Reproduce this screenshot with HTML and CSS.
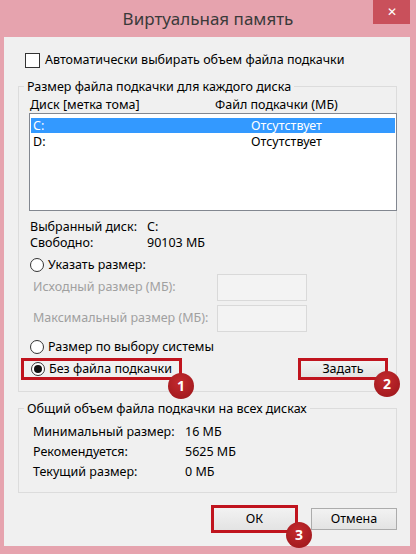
FILE: index.html
```html
<!DOCTYPE html>
<html lang="ru">
<head>
    <meta charset="UTF-8">
    <title>Виртуальная память</title>
    <link rel="stylesheet" href="styles.css">
</head>
<body>
    <div class="window">
        <div class="titlebar">
            <span></span>
            <div class="title">Виртуальная память</div>
            <div class="close-col"><div class="close-btn">✕</div></div>
        </div>

        <div class="client">
            <div class="check-row">
                <span class="checkbox"></span>
                <span>Автоматически выбирать объем файла подкачки</span>
            </div>

            <fieldset class="group group-disks">
                <legend>Размер файла подкачки для каждого диска</legend>
                <div class="list-head">
                    <span>Диск [метка тома]</span>
                    <span>Файл подкачки (МБ)</span>
                </div>
                <div class="listbox">
                    <div class="list-row selected"><span>C:</span><span>Отсутствует</span></div>
                    <div class="list-row"><span>D:</span><span>Отсутствует</span></div>
                </div>

                <div class="info-grid">
                    <span>Выбранный диск:</span><span>C:</span>
                    <span>Свободно:</span><span>90103 МБ</span>
                </div>

                <div class="radio-row first">
                    <span class="radio"></span>
                    <span>Указать размер:</span>
                </div>
                <div class="size-row">
                    <span>Исходный размер (МБ):</span>
                    <span class="input-box"></span>
                </div>
                <div class="size-row">
                    <span>Максимальный размер (МБ):</span>
                    <span class="input-box"></span>
                </div>
                <div class="radio-row system">
                    <span class="radio"></span>
                    <span>Размер по выбору системы</span>
                </div>
                <div class="action-row">
                    <div class="highlight mark-1">
                        <span class="radio checked"></span>
                        <span>Без файла подкачки</span>
                        <span class="badge">1</span>
                    </div>
                    <div class="btn btn-set">
                        Задать
                        <span class="badge">2</span>
                    </div>
                </div>
            </fieldset>

            <fieldset class="group group-total">
                <legend>Общий объем файла подкачки на всех дисках</legend>
                <div class="total-grid">
                    <span>Минимальный размер:</span><span>16 МБ</span>
                    <span>Рекомендуется:</span><span>5625 МБ</span>
                    <span>Текущий размер:</span><span>0 МБ</span>
                </div>
            </fieldset>

            <div class="footer">
                <div class="btn btn-ok">
                    ОК
                    <span class="badge">3</span>
                </div>
                <div class="btn btn-cancel">Отмена</div>
            </div>
        </div>
    </div>
</body>
</html>
```

FILE: styles.css
```css
* {
    box-sizing: border-box;
}
body {
    margin: 0;
    background: #e6a3ae;
    font-family: "Noto Sans", "Liberation Sans", Arial, sans-serif;
    font-size: 12.5px;
    color: #000;
}
.window {
    width: 416px;
    height: 554px;
    background: #e6a3ae;
}
.titlebar {
    height: 37px;
    display: grid;
    grid-template-columns: 1fr auto 1fr;
}
.title {
    font-size: 17px;
    line-height: 37px;
    color: #3a3a3a;
}
.close-col {
    display: flex;
    justify-content: flex-end;
    padding-right: 6px;
}
.close-btn {
    width: 37px;
    height: 24px;
    background: #c9505b;
    color: #fff;
    font-size: 12px;
    line-height: 24px;
    text-align: center;
}
.client {
    margin-left: 4px;
    width: 406px;
    height: 509px;
    background: #f0f0f0;
    padding: 14px 13px 0 14px;
}
.check-row {
    display: flex;
    align-items: center;
    height: 18px;
    padding-left: 7px;
    gap: 5px;
    line-height: 16px;
}
.checkbox {
    width: 15px;
    height: 15px;
    border: 1px solid #333;
    background: #fff;
}
.group {
    margin: 9px 0 0;
    border: 1px solid #dcdcdc;
    width: 379px;
    padding: 0 0 11px 11px;
    min-width: 0;
}
.group legend {
    padding: 0 3px;
    margin-left: -6px;
    line-height: 17px;
}
.list-head {
    display: grid;
    grid-template-columns: 185px 1fr;
    line-height: 16px;
    padding-top: 2px;
}
.listbox {
    margin-left: -1px;
    width: 368px;
    height: 98px;
    border: 1px solid #828790;
    background: #fff;
    padding: 4px 1px;
}
.list-row {
    display: grid;
    grid-template-columns: 218px 1fr;
    height: 15px;
    line-height: 15px;
    padding-left: 2px;
    margin-bottom: 1px;
}
.list-row.selected {
    background: #3399ff;
    color: #fff;
}
.info-grid {
    display: grid;
    grid-template-columns: 117px 1fr;
    line-height: 16px;
    margin-top: 8px;
}
.radio-row {
    display: flex;
    align-items: center;
    gap: 4px;
    height: 16px;
    line-height: 16px;
}
.radio-row.first {
    margin-top: 6px;
}
.radio-row.system {
    margin-top: 7px;
}
.radio {
    width: 14px;
    height: 14px;
    border: 1px solid #333;
    border-radius: 50%;
    background: #fff;
    display: flex;
    align-items: center;
    justify-content: center;
}
.radio.checked::after {
    content: "";
    width: 8px;
    height: 8px;
    border-radius: 50%;
    background: #111;
}
.size-row {
    display: grid;
    grid-template-columns: 184px 90px;
    align-items: center;
    height: 28px;
    padding-left: 3px;
    color: #a0a0a0;
    line-height: 16px;
}
.size-row + .size-row {
    margin-top: 3px;
}
.input-box {
    height: 27px;
    border: 1px solid #d9d9d9;
    background: #f3f3f3;
}
.action-row {
    display: flex;
    justify-content: space-between;
    align-items: center;
    margin-top: 3px;
    margin-left: -9px;
    height: 22px;
    padding-right: 8px;
}
.highlight {
    position: relative;
    display: flex;
    align-items: center;
    gap: 4px;
    height: 22px;
    width: 161px;
    padding-left: 7px;
    border: 3px solid #c0141e;
    line-height: 16px;
}
.badge {
    position: absolute;
    width: 26px;
    height: 26px;
    border-radius: 50%;
    background: radial-gradient(circle at 45% 35%, #c42a2e, #99151a);
    color: #fff;
    font-size: 14px;
    font-weight: bold;
    line-height: 26px;
    text-align: center;
}
.mark-1 .badge {
    right: -15px;
    bottom: -22px;
}
.btn {
    position: relative;
    display: flex;
    align-items: center;
    justify-content: center;
    height: 22px;
    border: 1px solid #acacac;
    background: linear-gradient(#f2f2f2, #e3e3e3);
    line-height: 16px;
}
.btn-set {
    width: 90px;
    border: 3px solid #c0141e;
}
.btn-set .badge {
    right: -15px;
    bottom: -20px;
}
.group-total {
    margin-top: 8px;
    padding-bottom: 10px;
}
.total-grid {
    display: grid;
    grid-template-columns: 152px 1fr;
    grid-auto-rows: 20px;
    align-items: center;
    padding: 5px 0 0 3px;
    line-height: 16px;
}
.footer {
    display: flex;
    justify-content: flex-end;
    align-items: center;
    gap: 13px;
    margin-top: 12px;
    height: 28px;
}
.btn-ok {
    width: 87px;
    height: 28px;
    border: 3px solid #c0141e;
}
.btn-ok .badge {
    right: -17px;
    bottom: -18px;
}
.btn-cancel {
    width: 86px;
}
```
